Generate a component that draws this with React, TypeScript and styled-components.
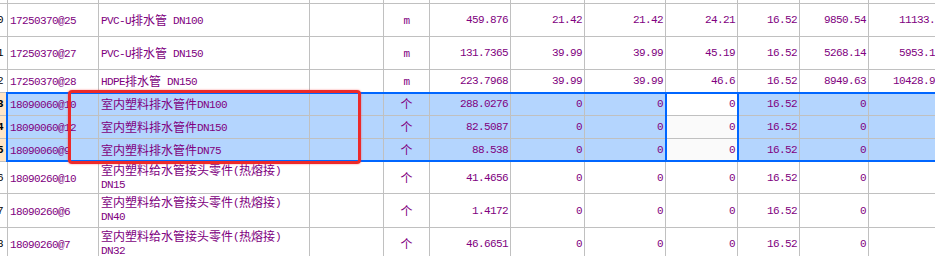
import React from 'react';
import styled, {createGlobalStyle} from 'styled-components';

const GRID = '#c0c0c0';
const INK = '#800080';
const COLS = '30px 91px 211px 74px 46px 81px 74px 81px 72px 62px 69px 75px';

type Item = {
  no: string;
  code: string;
  name: string;
  unit: string;
  qty: string;
  p1: string;
  p2: string;
  p3: string;
  p4: string;
  a1: string;
  a2: string;
  h: number;
  sel?: boolean;
  wrap?: boolean;
};

const FIT = '室内塑料给水管接头零件(热熔接)\n';

const rows: Item[] = [
  {no: '10', code: '17250370@25', name: 'PVC-U排水管 DN100', unit: 'm', qty: '459.876', p1: '21.42', p2: '21.42', p3: '24.21', p4: '16.52', a1: '9850.54', a2: '11133.6', h: 33},
  {no: '11', code: '17250370@27', name: 'PVC-U排水管 DN150', unit: 'm', qty: '131.7365', p1: '39.99', p2: '39.99', p3: '45.19', p4: '16.52', a1: '5268.14', a2: '5953.17', h: 33},
  {no: '12', code: '17250370@28', name: 'HDPE排水管 DN150', unit: 'm', qty: '223.7968', p1: '39.99', p2: '39.99', p3: '46.6', p4: '16.52', a1: '8949.63', a2: '10428.93', h: 23},
  {no: '13', code: '18090060@10', name: '室内塑料排水管件DN100', unit: '个', qty: '288.0276', p1: '0', p2: '0', p3: '0', p4: '16.52', a1: '0', a2: '0', h: 23, sel: true},
  {no: '14', code: '18090060@12', name: '室内塑料排水管件DN150', unit: '个', qty: '82.5087', p1: '0', p2: '0', p3: '0', p4: '16.52', a1: '0', a2: '0', h: 23, sel: true},
  {no: '15', code: '18090060@9', name: '室内塑料排水管件DN75', unit: '个', qty: '88.538', p1: '0', p2: '0', p3: '0', p4: '16.52', a1: '0', a2: '0', h: 23, sel: true},
  {no: '16', code: '18090260@10', name: FIT + 'DN15', unit: '个', qty: '41.4656', p1: '0', p2: '0', p3: '0', p4: '16.52', a1: '0', a2: '0', h: 32, wrap: true},
  {no: '17', code: '18090260@6', name: FIT + 'DN40', unit: '个', qty: '1.4172', p1: '0', p2: '0', p3: '0', p4: '16.52', a1: '0', a2: '0', h: 34, wrap: true},
  {no: '18', code: '18090260@7', name: FIT + 'DN32', unit: '个', qty: '46.6651', p1: '0', p2: '0', p3: '0', p4: '16.52', a1: '0', a2: '0', h: 33, wrap: true},
];

// split mixed text: CJK in a 12px font, latin in a 6px-advance mono
function Txt({text}: {text: string}) {
  const parts = text.split(/([\u3000-\u9fff]+)/);
  return (
    <Label>
      {parts.map((p, i) =>
        p === '' ? null : /[\u3000-\u9fff]/.test(p) ? <Han key={i}>{p}</Han> : <Lat key={i}>{p}</Lat>
      )}
    </Label>
  );
}

export default function App() {
  return (
    <>
      <Global />
      <Page>
        <Sheet>
          <Row $h={4}>
            {Array.from({length: 12}).map((_, i) => (
              <Cell key={i} />
            ))}
          </Row>
          {rows.map((r, idx) => (
            <Row key={r.code} $h={r.h} $sel={r.sel}>
              <Head $sel={r.sel}>{r.no}</Head>
              <Cell>
                <Txt text={r.code} />
              </Cell>
              <Name $wrap={r.wrap}>
                <Txt text={r.name} />
              </Name>
              <Cell />
              <Cell $align="center">
                <Txt text={r.unit} />
              </Cell>
              <Num>{r.qty}</Num>
              <Num>{r.p1}</Num>
              <Num>{r.p2}</Num>
              <Num $active={r.sel} $first={idx === 3}>
                {r.p3}
              </Num>
              <Num>{r.p4}</Num>
              <Num>{r.a1}</Num>
              <Num>{r.a2}</Num>
            </Row>
          ))}
        </Sheet>
        <Selection />
        <ActiveColumn />
        <Marker />
      </Page>
    </>
  );
}

const Global = createGlobalStyle`
  html, body {
    margin: 0;
    padding: 0;
    background: #ffffff;
    overflow: hidden;
  }
`;

const Page = styled.div`
  position: relative;
  width: 935px;
  height: 256px;
  overflow: hidden;
  background: #ffffff;
`;

const Sheet = styled.div`
  margin-left: -22px;
  width: 966px;
  display: flex;
  flex-direction: column;
`;

const Row = styled.div<{$h: number; $sel?: boolean}>`
  display: grid;
  grid-template-columns: ${COLS};
  height: ${(p) => p.$h}px;
  box-sizing: border-box;
  border-bottom: 1px solid ${GRID};
  background: ${(p) => (p.$sel ? '#b4d5fe' : '#ffffff')};
`;

const Cell = styled.div<{$align?: string}>`
  box-sizing: border-box;
  border-right: 1px solid ${GRID};
  display: flex;
  align-items: center;
  justify-content: ${(p) => (p.$align === 'center' ? 'center' : 'flex-start')};
  padding: 0 2px;
  color: ${INK};
  line-height: 14px;
  white-space: pre;
  overflow: hidden;
`;

const Head = styled(Cell)<{$sel?: boolean}>`
  justify-content: flex-end;
  padding-right: 4px;
  color: #000000;
  background: ${(p) => (p.$sel ? '#ffe5c6' : '#ffffff')};
  font-family: 'Liberation Mono', monospace;
  font-size: 11px;
  letter-spacing: -0.6px;
  font-weight: ${(p) => (p.$sel ? 700 : 400)};
`;

const Name = styled(Cell)<{$wrap?: boolean}>`
  align-items: ${(p) => (p.$wrap ? 'flex-start' : 'center')};
  padding-top: ${(p) => (p.$wrap ? '1px' : '0')};
`;

const Num = styled(Cell)<{$active?: boolean; $first?: boolean}>`
  justify-content: flex-end;
  padding-right: 2px;
  font-family: 'Liberation Mono', monospace;
  font-size: 11px;
  letter-spacing: -0.6px;
  background: ${(p) => (p.$active ? (p.$first ? '#ffffff' : '#fafafa') : 'transparent')};
`;

const Label = styled.span`
  display: block;
  white-space: pre;
  font-family: 'Noto Sans CJK SC', sans-serif;
  font-size: 12px;
  line-height: 14px;
`;

const Lat = styled.span`
  font-family: 'Liberation Mono', monospace;
  font-size: 11px;
  letter-spacing: -0.6px;
  line-height: 10px;
  vertical-align: 1px;
`;

const Han = styled.span`
  font-family: 'Noto Sans CJK SC', sans-serif;
  font-size: 12px;
  line-height: 10px;
`;

const Selection = styled.div`
  position: absolute;
  left: 6px;
  top: 92px;
  width: 960px;
  height: 70px;
  box-sizing: border-box;
  border: 2px solid #0066ff;
  pointer-events: none;
`;

const ActiveColumn = styled.div`
  position: absolute;
  left: 665px;
  top: 92px;
  width: 74px;
  height: 70px;
  box-sizing: border-box;
  border: 2px solid #0066ff;
  pointer-events: none;
`;

const Marker = styled.div`
  position: absolute;
  left: 68px;
  top: 90px;
  width: 293px;
  height: 74px;
  box-sizing: border-box;
  border: 3px solid #ec2a2a;
  border-radius: 4px;
  box-shadow: 0 0 2px rgba(255, 40, 40, 0.6);
  pointer-events: none;
`;
